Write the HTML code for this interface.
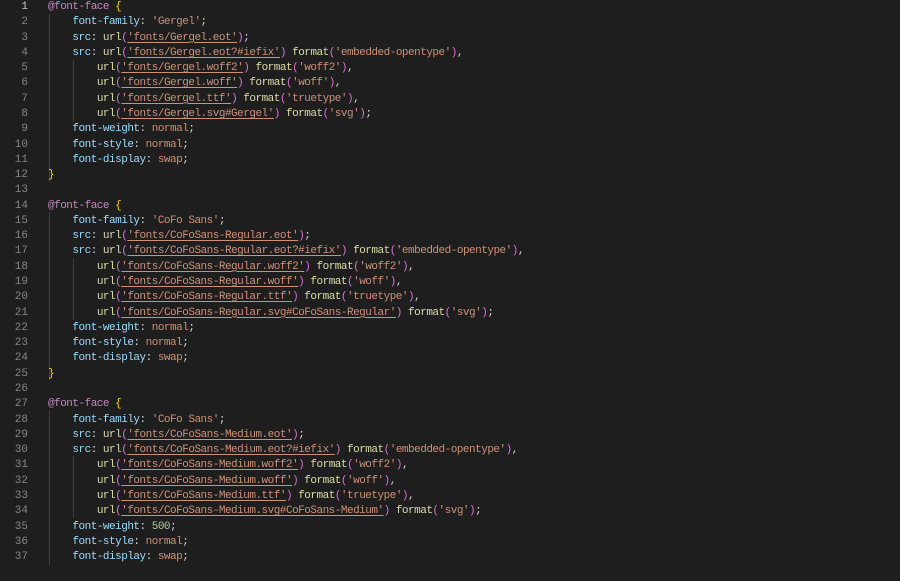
<!DOCTYPE html>
<html><head><meta charset="utf-8"><style>
html,body{margin:0;padding:0;background:#1e1e1e;width:900px;height:565px;overflow:hidden}
.ed{position:absolute;left:0;top:0px;font-family:"Liberation Mono",monospace;font-size:11px;letter-spacing:-0.5px;line-height:15.28px;white-space:pre;color:#d4d4d4}
.ln{position:absolute;left:0;width:28px;text-align:right;color:#858585;letter-spacing:0}
.ln.cur{color:#c6c6c6}
.c{position:absolute;left:48px}
.p{color:#9cdcfe}.s{color:#ce9178}.f{color:#dcdcaa}.b{color:#da70d6}.y{color:#ffd700}.a{color:#c586c0}.n{color:#b5cea8}
.u{text-decoration:underline;text-decoration-color:#ce9178;text-underline-offset:2px}
.g{position:absolute;width:1px;background:#404040}
</style></head><body>
<div class="g" style="left:49px;top:14px;height:168px"></div>
<div class="g" style="left:73px;top:60px;height:62px"></div>
<div class="g" style="left:49px;top:212px;height:168px"></div>
<div class="g" style="left:73px;top:258px;height:62px"></div>
<div class="g" style="left:49px;top:410px;height:155px"></div>
<div class="g" style="left:73px;top:456px;height:62px"></div>
<div class="ed">
<div class="ln cur" style="top:0">1</div><div class="c" style="top:0"><span class="a">@font-face</span> <span class="y">{</span></div>
<div class="ln" style="top:15.28px">2</div><div class="c" style="top:15.28px">    <span class="p">font-family</span>: <span class="s">'Gergel'</span>;</div>
<div class="ln" style="top:30.56px">3</div><div class="c" style="top:30.56px">    <span class="p">src</span>: <span class="f">url</span><span class="b">(</span><span class="s u">'fonts/Gergel.eot'</span><span class="b">)</span>;</div>
<div class="ln" style="top:45.84px">4</div><div class="c" style="top:45.84px">    <span class="p">src</span>: <span class="f">url</span><span class="b">(</span><span class="s u">'fonts/Gergel.eot?#iefix'</span><span class="b">)</span> <span class="f">format</span><span class="b">(</span><span class="s">'embedded-opentype'</span><span class="b">)</span>,</div>
<div class="ln" style="top:61.12px">5</div><div class="c" style="top:61.12px">        <span class="f">url</span><span class="b">(</span><span class="s u">'fonts/Gergel.woff2'</span><span class="b">)</span> <span class="f">format</span><span class="b">(</span><span class="s">'woff2'</span><span class="b">)</span>,</div>
<div class="ln" style="top:76.4px">6</div><div class="c" style="top:76.4px">        <span class="f">url</span><span class="b">(</span><span class="s u">'fonts/Gergel.woff'</span><span class="b">)</span> <span class="f">format</span><span class="b">(</span><span class="s">'woff'</span><span class="b">)</span>,</div>
<div class="ln" style="top:91.68px">7</div><div class="c" style="top:91.68px">        <span class="f">url</span><span class="b">(</span><span class="s u">'fonts/Gergel.ttf'</span><span class="b">)</span> <span class="f">format</span><span class="b">(</span><span class="s">'truetype'</span><span class="b">)</span>,</div>
<div class="ln" style="top:106.96px">8</div><div class="c" style="top:106.96px">        <span class="f">url</span><span class="b">(</span><span class="s u">'fonts/Gergel.svg#Gergel'</span><span class="b">)</span> <span class="f">format</span><span class="b">(</span><span class="s">'svg'</span><span class="b">)</span>;</div>
<div class="ln" style="top:122.24px">9</div><div class="c" style="top:122.24px">    <span class="p">font-weight</span>: <span class="s">normal</span>;</div>
<div class="ln" style="top:137.52px">10</div><div class="c" style="top:137.52px">    <span class="p">font-style</span>: <span class="s">normal</span>;</div>
<div class="ln" style="top:152.8px">11</div><div class="c" style="top:152.8px">    <span class="p">font-display</span>: <span class="s">swap</span>;</div>
<div class="ln" style="top:168.08px">12</div><div class="c" style="top:168.08px"><span class="y">}</span></div>
<div class="ln" style="top:183.36px">13</div>
<div class="ln" style="top:198.64px">14</div><div class="c" style="top:198.64px"><span class="a">@font-face</span> <span class="y">{</span></div>
<div class="ln" style="top:213.92px">15</div><div class="c" style="top:213.92px">    <span class="p">font-family</span>: <span class="s">'CoFo Sans'</span>;</div>
<div class="ln" style="top:229.2px">16</div><div class="c" style="top:229.2px">    <span class="p">src</span>: <span class="f">url</span><span class="b">(</span><span class="s u">'fonts/CoFoSans-Regular.eot'</span><span class="b">)</span>;</div>
<div class="ln" style="top:244.48px">17</div><div class="c" style="top:244.48px">    <span class="p">src</span>: <span class="f">url</span><span class="b">(</span><span class="s u">'fonts/CoFoSans-Regular.eot?#iefix'</span><span class="b">)</span> <span class="f">format</span><span class="b">(</span><span class="s">'embedded-opentype'</span><span class="b">)</span>,</div>
<div class="ln" style="top:259.76px">18</div><div class="c" style="top:259.76px">        <span class="f">url</span><span class="b">(</span><span class="s u">'fonts/CoFoSans-Regular.woff2'</span><span class="b">)</span> <span class="f">format</span><span class="b">(</span><span class="s">'woff2'</span><span class="b">)</span>,</div>
<div class="ln" style="top:275.04px">19</div><div class="c" style="top:275.04px">        <span class="f">url</span><span class="b">(</span><span class="s u">'fonts/CoFoSans-Regular.woff'</span><span class="b">)</span> <span class="f">format</span><span class="b">(</span><span class="s">'woff'</span><span class="b">)</span>,</div>
<div class="ln" style="top:290.32px">20</div><div class="c" style="top:290.32px">        <span class="f">url</span><span class="b">(</span><span class="s u">'fonts/CoFoSans-Regular.ttf'</span><span class="b">)</span> <span class="f">format</span><span class="b">(</span><span class="s">'truetype'</span><span class="b">)</span>,</div>
<div class="ln" style="top:305.6px">21</div><div class="c" style="top:305.6px">        <span class="f">url</span><span class="b">(</span><span class="s u">'fonts/CoFoSans-Regular.svg#CoFoSans-Regular'</span><span class="b">)</span> <span class="f">format</span><span class="b">(</span><span class="s">'svg'</span><span class="b">)</span>;</div>
<div class="ln" style="top:320.88px">22</div><div class="c" style="top:320.88px">    <span class="p">font-weight</span>: <span class="s">normal</span>;</div>
<div class="ln" style="top:336.16px">23</div><div class="c" style="top:336.16px">    <span class="p">font-style</span>: <span class="s">normal</span>;</div>
<div class="ln" style="top:351.44px">24</div><div class="c" style="top:351.44px">    <span class="p">font-display</span>: <span class="s">swap</span>;</div>
<div class="ln" style="top:366.72px">25</div><div class="c" style="top:366.72px"><span class="y">}</span></div>
<div class="ln" style="top:382px">26</div>
<div class="ln" style="top:397.28px">27</div><div class="c" style="top:397.28px"><span class="a">@font-face</span> <span class="y">{</span></div>
<div class="ln" style="top:412.56px">28</div><div class="c" style="top:412.56px">    <span class="p">font-family</span>: <span class="s">'CoFo Sans'</span>;</div>
<div class="ln" style="top:427.84px">29</div><div class="c" style="top:427.84px">    <span class="p">src</span>: <span class="f">url</span><span class="b">(</span><span class="s u">'fonts/CoFoSans-Medium.eot'</span><span class="b">)</span>;</div>
<div class="ln" style="top:443.12px">30</div><div class="c" style="top:443.12px">    <span class="p">src</span>: <span class="f">url</span><span class="b">(</span><span class="s u">'fonts/CoFoSans-Medium.eot?#iefix'</span><span class="b">)</span> <span class="f">format</span><span class="b">(</span><span class="s">'embedded-opentype'</span><span class="b">)</span>,</div>
<div class="ln" style="top:458.4px">31</div><div class="c" style="top:458.4px">        <span class="f">url</span><span class="b">(</span><span class="s u">'fonts/CoFoSans-Medium.woff2'</span><span class="b">)</span> <span class="f">format</span><span class="b">(</span><span class="s">'woff2'</span><span class="b">)</span>,</div>
<div class="ln" style="top:473.68px">32</div><div class="c" style="top:473.68px">        <span class="f">url</span><span class="b">(</span><span class="s u">'fonts/CoFoSans-Medium.woff'</span><span class="b">)</span> <span class="f">format</span><span class="b">(</span><span class="s">'woff'</span><span class="b">)</span>,</div>
<div class="ln" style="top:488.96px">33</div><div class="c" style="top:488.96px">        <span class="f">url</span><span class="b">(</span><span class="s u">'fonts/CoFoSans-Medium.ttf'</span><span class="b">)</span> <span class="f">format</span><span class="b">(</span><span class="s">'truetype'</span><span class="b">)</span>,</div>
<div class="ln" style="top:504.24px">34</div><div class="c" style="top:504.24px">        <span class="f">url</span><span class="b">(</span><span class="s u">'fonts/CoFoSans-Medium.svg#CoFoSans-Medium'</span><span class="b">)</span> <span class="f">format</span><span class="b">(</span><span class="s">'svg'</span><span class="b">)</span>;</div>
<div class="ln" style="top:519.52px">35</div><div class="c" style="top:519.52px">    <span class="p">font-weight</span>: <span class="n">500</span>;</div>
<div class="ln" style="top:534.8px">36</div><div class="c" style="top:534.8px">    <span class="p">font-style</span>: <span class="s">normal</span>;</div>
<div class="ln" style="top:550.08px">37</div><div class="c" style="top:550.08px">    <span class="p">font-display</span>: <span class="s">swap</span>;</div>
</div>
</body></html>
